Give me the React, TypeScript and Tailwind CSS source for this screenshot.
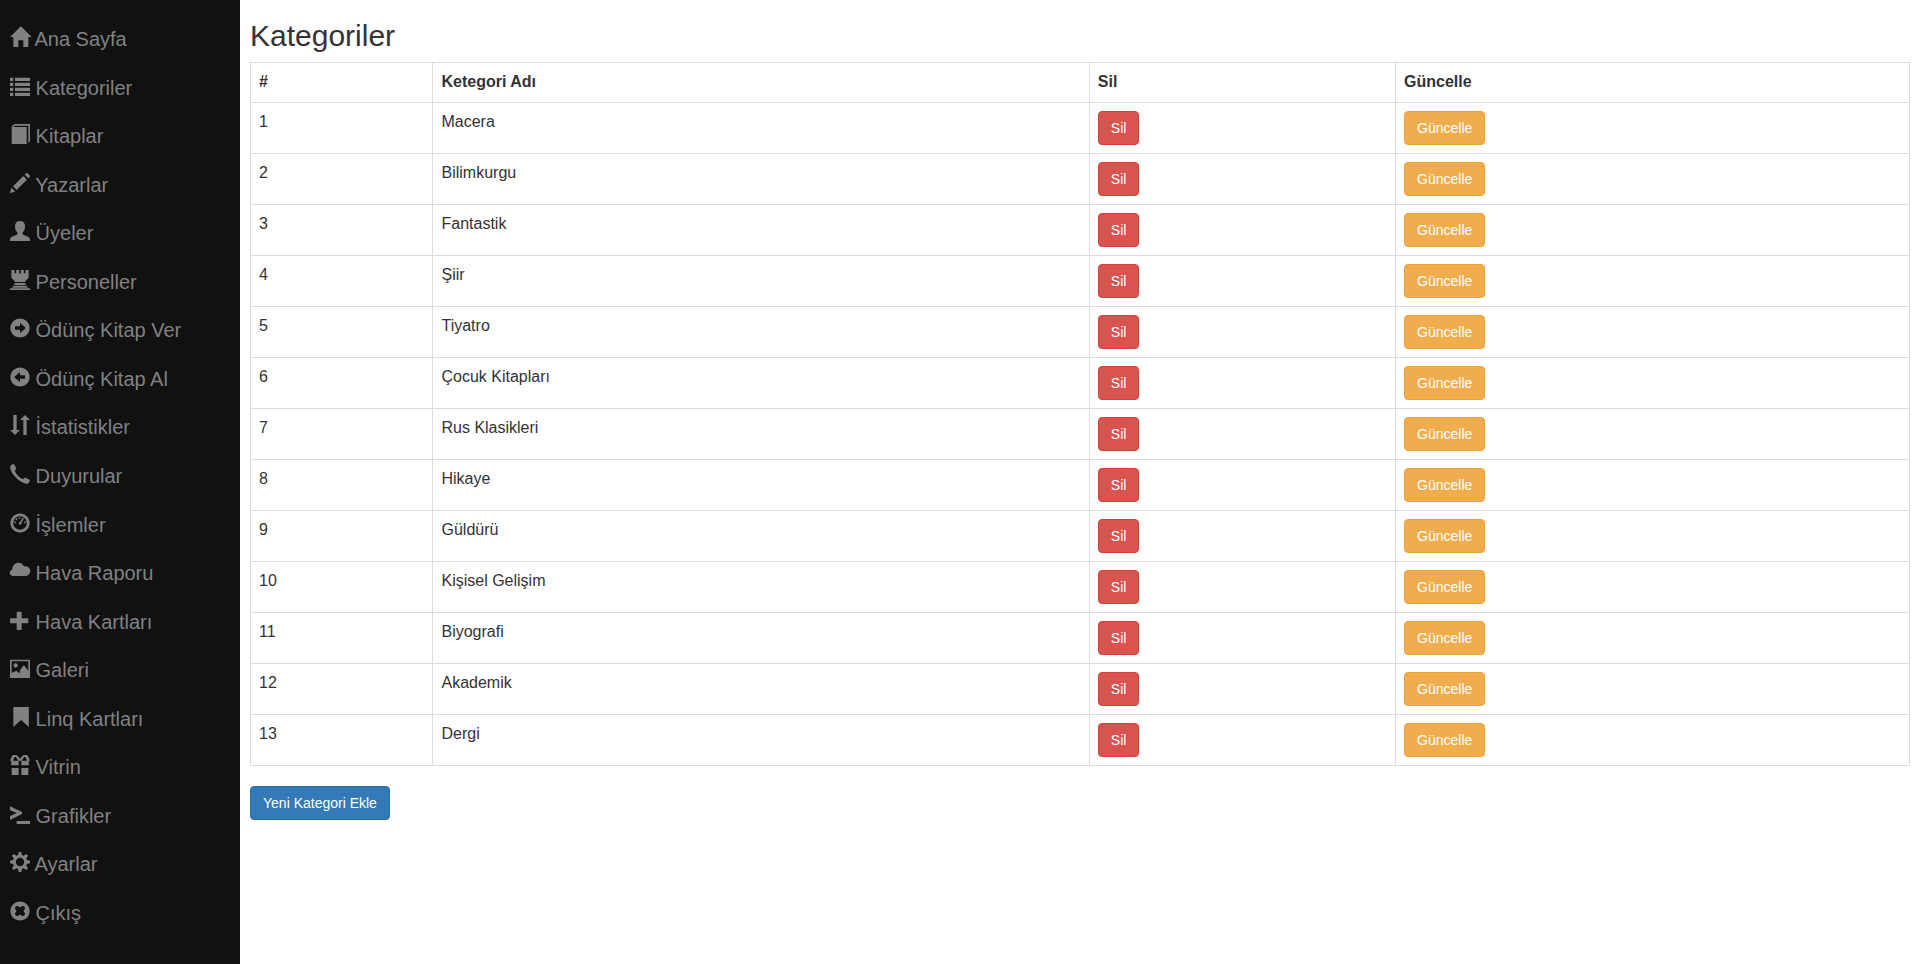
import type { ReactNode } from "react";

const disc =
  "M600 1177q117 0 224 -45.5t184.5 -123t123 -184.5t45.5 -224t-45.5 -224t-123 -184.5t-184.5 -123t-224 -45.5t-224 45.5t-184.5 123t-123 184.5t-45.5 224t45.5 224t123 184.5t184.5 123t224 45.5z";

/* Glyphs are drawn on a 1200-unit em with the y axis pointing up. */
const glyphs = {
  home: "M18 618l620 608q8 7 18.5 7t17.5 -7l608 -608q8 -8 5.5 -13t-12.5 -5h-175v-575q0 -10 -7.5 -17.5t-17.5 -7.5h-250q-10 0 -17.5 7.5t-7.5 17.5v375h-300v-375q0 -10 -7.5 -17.5t-17.5 -7.5h-250q-10 0 -17.5 7.5t-7.5 17.5v575h-175q-10 0 -12.5 5t5.5 13z",
  list: "M0 1100h200v-200h-200zM300 1100h900v-200h-900zM0 800h200v-200h-200zM300 800h900v-200h-900zM0 500h200v-200h-200zM300 500h900v-200h-900zM0 200h200v-200h-200zM300 200h900v-200h-900z",
  book: "M100 0V1040L260 1200H1200V160L1100 60V1100H290L210 1020H1000V0z",
  pencil:
    "M1011 1210q19 0 33 -13l153 -153q13 -14 13 -33t-13 -33l-99 -92l-214 214l95 96q13 14 32 14zM1013 800l-615 -614l-214 214l614 614zM317 96l-333 -112l110 335z",
  user: "M600 1200C420 1200 300 1090 300 900C300 740 340 600 440 520V440C440 400 400 370 320 340C120 260 0 210 0 100V0H1200V100C1200 210 1080 260 880 340C800 370 760 400 760 440V520C860 600 900 740 900 900C900 1090 780 1200 600 1200z",
  tower:
    "M80 1200H270V1000H370V1200H550V1000H650V1200H830V1000H930V1200H1120V740L920 540V480H280V540L80 740zM300 420H900L960 300H240zM180 250H1020L1060 140H140zM0 100H1200V0H0z",
  right: disc + "M600 900v-201h-300v-198h300v-201l350 300z",
  left: disc + "M600 900v-201h300v-198h-300v-201l-350 300z",
  sort: "M300 0l298 300h-198v900h-200v-900h-198zM900 1200l298 -300h-198v-900h-200v900h-198z",
  phone:
    "M60 1110Q130 1190 210 1200Q240 1200 255 1170L370 940Q385 910 360 880L280 800Q330 660 480 500Q640 340 790 290L870 370Q900 400 930 380L1170 260Q1200 240 1195 210Q1170 110 1080 30Q1040 0 980 10Q680 60 360 370Q50 690 10 980Q0 1050 60 1110z",
  dashboard:
    disc +
    "M600 1010a410 410 0 1 1 0 -820a410 410 0 1 1 0 820zM300 700a55 55 0 1 1 0 -110a55 55 0 1 1 0 110zM390 880a55 55 0 1 1 0 -110a55 55 0 1 1 0 110zM570 950a55 55 0 1 1 0 -110a55 55 0 1 1 0 110zM900 700a55 55 0 1 1 0 -110a55 55 0 1 1 0 110zM740 910L830 870L700 610Q710 500 600 500Q510 510 520 600Q540 670 630 670z",
  cloud:
    "M503 1089q110 0 200.5 -59.5t134.5 -156.5q44 14 90 14q120 0 205 -86.5t85 -206.5q0 -121 -85 -207.5t-205 -86.5h-750q-79 0 -135.5 57t-56.5 137q0 69 42.5 122.5t108.5 67.5q-2 12 -2 37q0 153 108 260.5t260 107.5z",
  plus: "M450 1100h200q21 0 35.5 -14.5t14.5 -35.5v-350h350q21 0 35.5 -14.5t14.5 -35.5v-200q0 -21 -14.5 -35.5t-35.5 -14.5h-350v-350q0 -21 -14.5 -35.5t-35.5 -14.5h-200q-21 0 -35.5 14.5t-14.5 35.5v350h-350q-21 0 -35.5 14.5t-14.5 35.5v200q0 21 14.5 35.5t35.5 14.5h350v350q0 21 14.5 35.5t35.5 14.5z",
  picture:
    "M0 1100H1200V0H0zM100 1000V300L380 440L560 300L620 360L570 420L830 780L1100 440V1000zM340 880a130 130 0 1 1 0 -260a130 130 0 1 1 0 260z",
  bookmark: "M200 1200H1130V0L665 420L200 0z",
  gift: "M0 870L130 1150Q160 1200 210 1200H360Q400 1200 430 1170L600 980L770 1170Q800 1200 840 1200H990Q1040 1200 1070 1150L1200 870L1130 840V580H680V860H520V580H70V840zM180 860L270 1080H340L510 860zM690 860L860 1080H930L1020 860zM100 420H520V0H100zM680 420H1100V0H680z",
  console: "M0 1060L720 720V600L0 240V480L400 660L0 820zM400 180H1200V0H400z",
  cog: "M1200 520V680L1015 715L975 812L1081 968L968 1081L812 975L715 1015L680 1200H520L485 1015L388 975L232 1081L119 968L225 812L185 715L0 680V520L185 485L225 388L119 232L232 119L388 225L485 185L520 0H680L715 185L812 225L968 119L1081 232L975 388L1015 485zM600 850a250 250 0 1 1 0 -500a250 250 0 1 1 0 500z",
  remove:
    disc +
    "M600 810L740 900L840 880L880 840L900 740L810 600L900 460L880 360L840 320L740 300L600 390L460 300L360 320L320 360L300 460L390 600L300 740L320 840L360 880L460 900z",
};

type GlyphName = keyof typeof glyphs;

function Glyph({ name }: { name: GlyphName }) {
  return (
    <svg
      viewBox="0 0 1200 1200"
      className="inline-block size-5 overflow-visible fill-current align-[-1px]"
      aria-hidden="true"
    >
      <g transform="translate(0 1200) scale(1 -1)">
        <path d={glyphs[name]} fillRule="evenodd" />
      </g>
    </svg>
  );
}

const menu: { icon: GlyphName; label: string }[] = [
  { icon: "home", label: "Ana Sayfa" },
  { icon: "list", label: "Kategoriler" },
  { icon: "book", label: "Kitaplar" },
  { icon: "pencil", label: "Yazarlar" },
  { icon: "user", label: "Üyeler" },
  { icon: "tower", label: "Personeller" },
  { icon: "right", label: "Ödünç Kitap Ver" },
  { icon: "left", label: "Ödünç Kitap Al" },
  { icon: "sort", label: "İstatistikler" },
  { icon: "phone", label: "Duyurular" },
  { icon: "dashboard", label: "İşlemler" },
  { icon: "cloud", label: "Hava Raporu" },
  { icon: "plus", label: "Hava Kartları" },
  { icon: "picture", label: "Galeri" },
  { icon: "bookmark", label: "Linq Kartları" },
  { icon: "gift", label: "Vitrin" },
  { icon: "console", label: "Grafikler" },
  { icon: "cog", label: "Ayarlar" },
  { icon: "remove", label: "Çıkış" },
];

const categories = [
  "Macera",
  "Bilimkurgu",
  "Fantastik",
  "Şiir",
  "Tiyatro",
  "Çocuk Kitapları",
  "Rus Klasikleri",
  "Hikaye",
  "Güldürü",
  "Kişisel Gelişim",
  "Biyografi",
  "Akademik",
  "Dergi",
];

const tones = {
  danger: "border-[#d43f3a] bg-[#d9534f] hover:bg-[#c9302c]",
  warning: "border-[#eea236] bg-[#f0ad4e] hover:bg-[#ec971f]",
  primary: "border-[#2e6da4] bg-[#337ab7] hover:bg-[#286090]",
};

function Button({ tone, children }: { tone: keyof typeof tones; children: ReactNode }) {
  return (
    <button
      type="button"
      className={`block cursor-pointer rounded border px-3 py-1.5 text-sm leading-5 text-white ${tones[tone]}`}
    >
      {children}
    </button>
  );
}

const headCell = "border border-[#ddd] px-2 pt-2 pb-[10px] text-left align-top";
const cell = "border border-[#ddd] p-2 text-left align-top";

export default function App() {
  return (
    <div className="flex min-h-screen bg-white font-['Liberation_Sans',Arial,sans-serif] text-base text-[#333]">
      <nav className="flex w-60 shrink-0 flex-col bg-[#111] pt-[15px] pb-[27px]">
        <ul className="grid flex-1 auto-rows-fr">
          {menu.map(({ icon, label }) => (
            <li key={label} className="flex items-center">
              <a
                href="#"
                className="block flex-1 px-2.5 text-xl leading-7 whitespace-nowrap text-[#818181] hover:text-[#f1f1f1]"
              >
                <Glyph name={icon} /> {label}
              </a>
            </li>
          ))}
        </ul>
      </nav>
      <main className="min-w-0 flex-1 pt-5 pr-[3px] pl-2.5">
        <h1 className="mb-2.5 text-3xl leading-8">Kategoriler</h1>
        <table className="mb-5 w-full border-collapse leading-[21px]">
          <thead>
            <tr>
              <th className={`${headCell} w-[11%]`}>#</th>
              <th className={headCell}>Ketegori Adı</th>
              <th className={headCell}>Sil</th>
              <th className={headCell}>Güncelle</th>
            </tr>
          </thead>
          <tbody>
            {categories.map((name, index) => (
              <tr key={name}>
                <td className={cell}>{index + 1}</td>
                <td className={cell}>{name}</td>
                <td className={cell}>
                  <Button tone="danger">Sil</Button>
                </td>
                <td className={cell}>
                  <Button tone="warning">Güncelle</Button>
                </td>
              </tr>
            ))}
          </tbody>
        </table>
        <Button tone="primary">Yeni Kategori Ekle</Button>
      </main>
    </div>
  );
}
